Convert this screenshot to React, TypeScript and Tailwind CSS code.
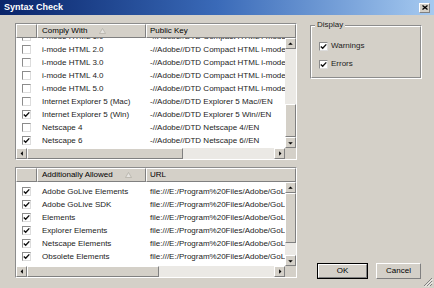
import React from 'react';

type Row = { name: string; value: string; checked: boolean };

const complyRows: Row[] = [
  { name: 'i-mode HTML 1.0', value: '-//Adobe//DTD Compact HTML i-mode', checked: false },
  { name: 'i-mode HTML 2.0', value: '-//Adobe//DTD Compact HTML i-mode', checked: false },
  { name: 'i-mode HTML 3.0', value: '-//Adobe//DTD Compact HTML i-mode', checked: false },
  { name: 'i-mode HTML 4.0', value: '-//Adobe//DTD Compact HTML i-mode', checked: false },
  { name: 'i-mode HTML 5.0', value: '-//Adobe//DTD Compact HTML i-mode', checked: false },
  { name: 'Internet Explorer 5 (Mac)', value: '-//Adobe//DTD Explorer 5 Mac//EN', checked: false },
  { name: 'Internet Explorer 5 (Win)', value: '-//Adobe//DTD Explorer 5 Win//EN', checked: true },
  { name: 'Netscape 4', value: '-//Adobe//DTD Netscape 4//EN', checked: false },
  { name: 'Netscape 6', value: '-//Adobe//DTD Netscape 6//EN', checked: true },
];

const url = 'file:///E:/Program%20Files/Adobe/GoLive/Modules/Elements';
const allowedRows: Row[] = [
  { name: 'Adobe GoLive Elements', value: url, checked: true },
  { name: 'Adobe GoLive SDK', value: url, checked: true },
  { name: 'Elements', value: url, checked: true },
  { name: 'Explorer Elements', value: url, checked: true },
  { name: 'Netscape Elements', value: url, checked: true },
  { name: 'Obsolete Elements', value: url, checked: true },
];

const raised = 'border border-t-white border-l-white border-r-[#808080] border-b-[#808080] bg-[#d4d0c8]';

function Check({ checked }: { checked: boolean }) {
  return (
    <div className="w-[9px] h-[9px] border border-t-[#8c8c8c] border-l-[#8c8c8c] border-r-[#dcdcdc] border-b-[#dcdcdc] bg-white flex items-center justify-center shrink-0">
      {checked && (
        <svg width="7" height="7" viewBox="0 0 7 7">
          <path d="M0.8 3.4 L2.7 5.3 L6.3 1.4" fill="none" stroke="#111" strokeWidth="1.4" />
        </svg>
      )}
    </div>
  );
}

function Arrow({ dir }: { dir: 'up' | 'down' | 'left' | 'right' }) {
  const pts = {
    up: '1.5,5 5.5,1 9.5,5',
    down: '1.5,2 5.5,6 9.5,2',
    left: '5,1.5 1,5.5 5,9.5',
    right: '2,1.5 6,5.5 2,9.5',
  }[dir];
  const vb = dir === 'up' || dir === 'down' ? '0 0 11 7' : '0 0 7 11';
  const w = dir === 'up' || dir === 'down' ? 7 : 4;
  const h = dir === 'up' || dir === 'down' ? 4 : 7;
  return (
    <div className={`w-[11px] h-[11px] shrink-0 flex items-center justify-center ${raised}`}>
      <svg width={w} height={h} viewBox={vb}>
        <polygon points={pts} fill="#000" />
      </svg>
    </div>
  );
}

function SortArrow() {
  return (
    <svg width="7" height="6" viewBox="0 0 7 6" className="ml-[12px]">
      <polygon points="3.5,0.5 6.5,5.5 0.5,5.5" fill="#e6e4e0" stroke="#b0aca4" strokeWidth="0.7" />
    </svg>
  );
}

function ListBox({
  first,
  second,
  rows,
  offset,
  bodyH,
  vTrackTop,
  vThumb,
  vTrackBottom,
  hThumb,
  height,
}: {
  first: string;
  second: string;
  rows: Row[];
  offset: number;
  bodyH: string;
  vTrackTop: string;
  vThumb: string;
  vTrackBottom: string;
  hThumb: string;
  height: string;
}) {
  return (
    <div className={`${height} w-[282px] border border-t-[#8c8c8c] border-l-[#8c8c8c] border-r-white border-b-white flex flex-col`}>
      <div className="flex h-[14px] shrink-0 text-black">
        <div className={`w-[21px] h-full ${raised}`} />
        <div className={`w-[109px] h-full pl-[4px] flex items-center ${raised}`}>
          <span>{first}</span>
          <SortArrow />
        </div>
        <div className={`flex-1 h-full pl-[3px] flex items-center ${raised}`}>{second}</div>
      </div>
      <div className={`flex ${bodyH} shrink-0`}>
        <div className="flex-1 bg-white overflow-hidden">
          <div style={{ marginTop: offset }}>
            {rows.map((r, i) => (
              <div key={i} className="h-[13px] flex items-center whitespace-nowrap text-[#1c1c1c]">
                <div className="w-[21px] pl-[6px] flex items-center shrink-0">
                  <Check checked={r.checked} />
                </div>
                <div className="w-[109px] pl-[5px] shrink-0">{r.name}</div>
                <div className="pl-[4px]">{r.value}</div>
              </div>
            ))}
          </div>
        </div>
        <div className="w-[11px] flex flex-col shrink-0">
          <Arrow dir="up" />
          <div className={`${vTrackTop} bg-[#ebe9e5]`} />
          <div className={`${vThumb} ${raised}`} />
          <div className={`${vTrackBottom} bg-[#ebe9e5]`} />
          <Arrow dir="down" />
        </div>
      </div>
      <div className="flex h-[11px] shrink-0">
        <Arrow dir="left" />
        <div className={`${hThumb} h-full ${raised}`} />
        <div className="flex-1 h-full bg-[#ebe9e5]" />
        <Arrow dir="right" />
        <div className="w-[11px] h-full bg-[#d4d0c8]" />
      </div>
    </div>
  );
}

export default function App() {
  return (
    <div className="w-[434px] h-[288px] bg-[#d4d0c8] flex flex-col relative overflow-hidden text-[8px] font-['Liberation_Sans',Arial,sans-serif]">
      {/* Title bar */}
      <div className="h-[15px] shrink-0 bg-linear-to-r from-[#0a246a] via-[#3a6ab8] to-[#a6caf0] flex items-center justify-between pl-[4px] pr-[4px]">
        <span className="text-white font-bold text-[9px]">Syntax Check</span>
        <div className={`w-[11px] h-[10px] flex items-center justify-center ${raised}`}>
          <svg width="6" height="5" viewBox="0 0 6 5">
            <path d="M0.5 0.5 L5.5 4.5 M5.5 0.5 L0.5 4.5" stroke="#000" strokeWidth="1.3" />
          </svg>
        </div>
      </div>

      <div className="flex flex-1">
        {/* Lists */}
        <div className="ml-[15px] mt-[8px] flex flex-col gap-[7px]">
          <ListBox
            first="Comply With"
            second="Public Key"
            rows={complyRows}
            offset={-8}
            height="h-[137px]"
            bodyH="h-[110px]"
            vTrackTop="h-[55px]"
            vThumb="h-[33px]"
            vTrackBottom="h-0"
            hThumb="w-[156px]"
          />
          <ListBox
            first="Additionally Allowed"
            second="URL"
            rows={allowedRows}
            offset={3}
            height="h-[111px]"
            bodyH="h-[84px]"
            vTrackTop="h-0"
            vThumb="h-[50px]"
            vTrackBottom="h-[12px]"
            hThumb="w-[132px]"
          />
        </div>

        {/* Right column */}
        <div className="ml-[13px] w-[112px] flex flex-col">
          <div className="mt-[10px] h-[54px] relative border border-t-[#8c8c8c] border-l-[#8c8c8c] border-r-white border-b-white">
            <div className="h-full w-full border border-t-white border-l-white border-r-[#8c8c8c] border-b-[#8c8c8c] pl-[7px] pt-[13px] flex flex-col gap-[6px]">
              <div className="flex items-center gap-[3px]">
                <Check checked />
                <span className="text-[#1c1c1c]">Warnings</span>
              </div>
              <div className="flex items-center gap-[3px]">
                <Check checked />
                <span className="text-[#1c1c1c]">Errors</span>
              </div>
            </div>
            <span className="absolute -top-[5px] left-[4px] px-[2px] bg-[#d4d0c8] leading-[8px] text-[#1c1c1c]">Display</span>
          </div>
          <div className="flex-1" />
          <div className="flex mb-[9px] ml-[7px] gap-[8px]">
            <div className="w-[51px] h-[16px] border border-black">
              <div className={`w-full h-full flex items-center justify-center ${raised}`}>OK</div>
            </div>
            <div className={`w-[45px] h-[16px] flex items-center justify-center ${raised}`}>Cancel</div>
          </div>
        </div>
      </div>

      {/* Size grip */}
      <svg width="10" height="10" viewBox="0 0 10 10" className="absolute right-[1px] bottom-[1px]">
        <path d="M9 1 L1 9 M9 4 L4 9 M9 7 L7 9" stroke="#808080" strokeWidth="1" />
        <path d="M9.8 1.8 L1.8 9.8 M9.8 4.8 L4.8 9.8" stroke="#fff" strokeWidth="0.8" />
      </svg>
    </div>
  );
}
